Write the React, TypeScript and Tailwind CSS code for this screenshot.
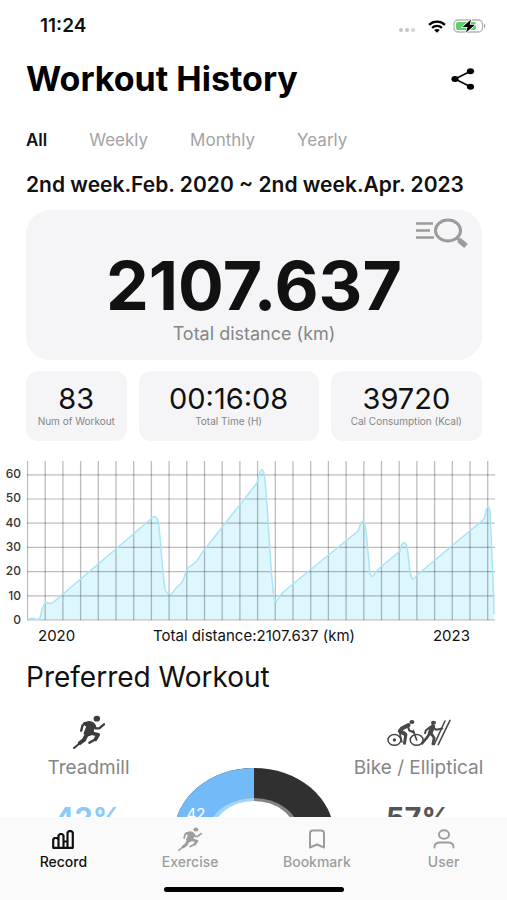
import { useState } from 'react'
import type { ReactNode } from 'react'

const tabs = ['All', 'Weekly', 'Monthly', 'Yearly']

const stats = [
  { value: '83', label: 'Num of Workout' },
  { value: '00:16:08', label: 'Total Time (H)' },
  { value: '39720', label: 'Cal Consumption (Kcal)' },
]

const axis = [60, 50, 40, 30, 20, 10, 0]
const columns = Array.from({ length: 27 }, (_, i) => i)
const rows = [0, 1, 2, 3, 4, 5, 6]

const curve =
  'M0 157.5 L7 157.5 Q11 160 13 157 Q16 143 19 141.5 Q23 143 26 141.5 L125 57 Q129 53 131 60 C134 75 135 112 138 128 Q140 135 145 132.5 Q149 126 154 122.5 C158 119 158 108 162 106 Q171 101 174 93 L178 88 L230 22 L233 11 Q235.500 5 237.500 15 C241 45 242 90 246 128 C248 148 250 138 253 135 Q256 131 261 127 L331 70 L334 62 Q337 57 339 70 C341 90 342 105 343 112 Q345 119 348 112 Q350 109 355 105 L373 90 L375 83 Q378 79 380 86 C382 96 382 108 384 115 Q386 121 390 114 L457 58 L459 50 Q461 42 463 50 C464 75 466 110 467 153'

function Wifi() {
  return (
    <svg viewBox="0 0 20 14" className="h-[13px] w-5" aria-hidden="true">
      <path d="M1.500 5.200C6.200.7 13.800.7 18.500 5.200M4.700 8.400C7.600 5.600 12.400 5.600 15.300 8.400" fill="none" stroke="black" strokeWidth="2.500" />
      <path d="M7 10.800C8.700 9.300 11.300 9.300 13 10.800L10 13.600Z" />
    </svg>
  )
}

function Battery() {
  return (
    <svg viewBox="0 0 34 16" className="h-4 w-[34px]" aria-hidden="true">
      <rect x="1" y="2" width="28.500" height="12" rx="4" fill="white" stroke="#b5b5b5" strokeWidth="1.300" />
      <rect x="3" y="4" width="20" height="8" rx="2" fill="#5fd068" />
      <path d="M31 5.500Q33.500 8 31 10.500Z" fill="#9a9a9a" />
      <path d="M18 1.500L9.500 9H14.500L13 14.500L22 6.800H16.800Z" stroke="white" strokeWidth="1.500" paintOrder="stroke" />
    </svg>
  )
}

function Share() {
  return (
    <svg viewBox="0 0 24 22" className="h-[22px] w-6" aria-hidden="true">
      <path d="M19.500 3.300L4 11L19.500 18.700" fill="none" stroke="black" strokeWidth="1.600" />
      <ellipse cx="19.500" cy="3.300" rx="3.600" ry="3" />
      <ellipse cx="4" cy="11" rx="3.600" ry="3" />
      <ellipse cx="19.500" cy="18.700" rx="3.600" ry="3" />
    </svg>
  )
}

function ListSearch() {
  return (
    <svg viewBox="0 0 52 32" className="h-8 w-[52px]" fill="none" stroke="#9b9b9b" aria-hidden="true">
      <path d="M0 5.500H17M0 12.500H14M0 19.500H18" strokeWidth="2.400" />
      <ellipse cx="32" cy="12.500" rx="12.500" ry="10.500" strokeWidth="3" />
      <path d="M41 20L44 22.500" strokeWidth="3" />
      <path d="M43 22L50 28" strokeWidth="5.500" />
    </svg>
  )
}

function Runner({ className }: { className: string }) {
  return (
    <svg viewBox="40 33 94 102" preserveAspectRatio="none" className={className} fill="none" stroke="currentColor" strokeLinecap="round" strokeLinejoin="round" aria-hidden="true">
      <ellipse cx="110" cy="44" rx="9.500" ry="8.500" fill="currentColor" stroke="none" />
      <path d="M72 58L88 54Q100 55 104 65L98 80L100 88L86 94L74 88L82 68Z" fill="currentColor" strokeWidth="6" />
      <path d="M75 59L68 64L64 80" strokeWidth="7" />
      <path d="M102 64L107 73L117 73L131 61" strokeWidth="7" />
      <path d="M82 88L72 108L60 117" strokeWidth="12" />
      <path d="M68 111L43 132" strokeWidth="6" />
      <path d="M90 86L114 92L106 106" strokeWidth="11" />
      <path d="M107 105L88 116" strokeWidth="7" />
    </svg>
  )
}

function BikeElliptical() {
  return (
    <svg viewBox="28 36 190 80" className="h-[27px] w-16" fill="none" stroke="#484848" strokeLinecap="round" strokeLinejoin="round" aria-hidden="true">
      <ellipse cx="50" cy="98" rx="19" ry="16" strokeWidth="4.500" />
      <ellipse cx="116" cy="98" rx="19" ry="16" strokeWidth="4.500" />
      <g fill="#484848" stroke="none">
        <circle cx="50" cy="98" r="5" />
        <ellipse cx="102" cy="45" rx="7.500" ry="6" />
        <ellipse cx="166" cy="47" rx="7.500" ry="6" />
      </g>
      <path d="M92 54L72 64L66 72L80 80" strokeWidth="12" />
      <path d="M66 70L84 82L80 108" strokeWidth="9" />
      <path d="M90 58L94 70L108 76" strokeWidth="6" />
      <path d="M106 70L116 98M66 78L72 104" strokeWidth="5" />
      <path d="M164 58L156 78" strokeWidth="14" />
      <path d="M156 60L143 70L141 78M164 60L174 68L192 64" strokeWidth="6" />
      <path d="M154 80L146 92L132 108M160 80L168 92L164 110" strokeWidth="8" />
      <path d="M200 42L168 112M215 40L180 112" strokeWidth="4.500" />
    </svg>
  )
}

function RecordIcon() {
  return (
    <svg viewBox="0 0 22 19" className="h-[19px] w-[22px]" fill="none" stroke="currentColor" strokeWidth="2.200" strokeLinejoin="round" aria-hidden="true">
      <path d="M1.200 17.800V9.500L2.500 8H5L6.500 9.500V17.800ZM6.500 17.800V5.500L8 4H10L11.500 5.500V17.800ZM11.500 17.800V11.500H15.500V17.800ZM15.500 17.800V2.500L17 1.200H19.500L20.800 2.500V17.800Z" />
    </svg>
  )
}

function BookmarkIcon() {
  return (
    <svg viewBox="0 0 18 20" className="h-5 w-[18px]" fill="none" stroke="currentColor" strokeWidth="2" strokeLinejoin="round" aria-hidden="true">
      <path d="M2 18.500V4Q2 1.500 5 1.500H13Q16 1.500 16 4V18.500L9 15.500Z" />
    </svg>
  )
}

function UserIcon() {
  return (
    <svg viewBox="0 0 22 20" className="h-5 w-[22px]" fill="none" stroke="currentColor" strokeWidth="2" strokeLinecap="round" aria-hidden="true">
      <ellipse cx="11" cy="5.500" rx="5" ry="4.200" />
      <path d="M1.500 18.500V17.500Q2 13.500 7 13.500H15Q20 13.500 20.500 17.500V18.500" />
    </svg>
  )
}

function DistanceChart() {
  return (
    <section className="mt-5">
      <div className="flex h-[167px] pr-3">
        <ul className="flex w-[27px] shrink-0 flex-col justify-between pt-[5px] pr-1.5 text-right text-xs leading-4 font-medium text-[#333]">
          {axis.map((n) => (
            <li key={n}>{n}</li>
          ))}
        </ul>
        <svg viewBox="0 0 468 160" preserveAspectRatio="none" className="h-40 min-w-0 flex-1" role="img" aria-label="Distance per week">
          <path d={`${curve} V159 H0 Z`} fill="#def6fd" />
          <g stroke="#000000" strokeOpacity="0.26">
            {columns.map((i) => (
              <line key={i} x1={0.5 + i * 17.7} x2={0.5 + i * 17.7} y1="0" y2="159" strokeWidth="1.300" />
            ))}
            {rows.map((i) => (
              <line key={i} x1="0" x2="468" y1={159 - i * 24.2} y2={159 - i * 24.2} strokeWidth="1.200" />
            ))}
          </g>
          <path d={curve} fill="none" stroke="#a9e5f7" strokeWidth="1.500" />
        </svg>
      </div>
      <div className="flex justify-between pr-[37px] pl-[38px] text-[15px] leading-4 text-[#111]">
        <span>2020</span>
        <span>Total distance:2107.637 (km)</span>
        <span>2023</span>
      </div>
    </section>
  )
}

function Donut() {
  return (
    <svg viewBox="0 0 160 134" className="mx-auto mt-[54px] h-[134px] w-40" role="img" aria-label="Treadmill 42%, Bike / Elliptical 57%">
      <ellipse cx="80" cy="67" rx="80" ry="67" fill="#303030" />
      <path d="M80 67V0A80 67 0 0 0 41 125.500Z" fill="#73bbf8" />
      <ellipse cx="80" cy="67" rx="46" ry="37" fill="#858585" />
      <path d="M80 67V30A46 37 0 0 0 57.500 99.500Z" fill="#a5d4fb" />
      <ellipse cx="80" cy="67" rx="42" ry="34" fill="white" />
      <text x="22" y="51" textAnchor="middle" fill="white" fontSize="15">42</text>
    </svg>
  )
}

function Preferred({ icon, name, share, color }: { icon: ReactNode; name: string; share: string; color: string }) {
  return (
    <div className="flex flex-col items-center whitespace-nowrap">
      <div className="flex h-9 items-center">{icon}</div>
      <p className="mt-1.5 text-[19px] leading-6 text-[#868686]">{name}</p>
      <p className={`mt-[22px] text-[29px] leading-8 font-bold ${color}`}>{share}</p>
    </div>
  )
}

const navItems = [
  { label: 'Record', icon: <RecordIcon /> },
  { label: 'Exercise', icon: <Runner className="h-6 w-6" /> },
  { label: 'Bookmark', icon: <BookmarkIcon /> },
  { label: 'User', icon: <UserIcon /> },
]

export default function App() {
  const [tab, setTab] = useState('All')
  const [page, setPage] = useState('Record')

  return (
    <div className="flex h-screen flex-col bg-white font-['Inter','Liberation_Sans',sans-serif] text-[#111]">
      <div className="flex h-[52px] shrink-0 items-center justify-between pr-5 pl-10">
        <span className="text-[19px] leading-6 font-semibold">11:24</span>
        <div className="flex items-center">
          <span className="mt-2 mr-3 flex gap-0.5">
            <i className="size-1 rounded-sm bg-[#c4c4c4]" />
            <i className="size-1 rounded-sm bg-[#c4c4c4]" />
            <i className="size-1 rounded-sm bg-[#d4d4d4]" />
          </span>
          <Wifi />
          <span className="ml-1.5">
            <Battery />
          </span>
        </div>
      </div>

      <main className="min-h-0 flex-1 overflow-y-auto [scrollbar-width:none]">
        <header className="flex items-center justify-between pt-[7px] pr-8 pl-[26px]">
          <h1 className="text-[34px] leading-10 font-bold text-black">Workout History</h1>
          <button type="button" aria-label="Share">
            <Share />
          </button>
        </header>

        <div className="mt-[29px] flex gap-x-[42px] px-[26px]">
          {tabs.map((t) => (
            <button key={t} type="button" onClick={() => setTab(t)} className={`text-[17px] leading-6 ${t === tab ? 'font-semibold text-[#111]' : 'text-[#a3a3a3]'}`}>
              {t}
            </button>
          ))}
        </div>

        <p className="mt-[21px] px-[26px] text-[21px] leading-6 font-semibold whitespace-nowrap">2nd week.Feb. 2020 ~ 2nd week.Apr. 2023</p>

        <div className="pr-[25px] pl-[26px]">
          <section className="relative mt-[13px] h-[150px] rounded-3xl bg-[#f5f5f7] pt-[43px] text-center">
            <button type="button" aria-label="Search records" className="absolute top-2 right-3.5">
              <ListSearch />
            </button>
            <p className="text-[68px] leading-16 font-bold">2107.637</p>
            <p className="mt-[5px] text-[18px] leading-6 text-[#868686]">Total distance (km)</p>
          </section>

          <section className="mt-[11px] grid grid-cols-[101fr_181fr_152fr] gap-3">
            {stats.map((s) => (
              <div key={s.label} className="h-[70px] rounded-xl bg-[#f5f5f7] pt-3 text-center whitespace-nowrap">
                <p className="text-[29px] leading-8">{s.value}</p>
                <p className="text-[10px] leading-3 text-[#868686]">{s.label}</p>
              </div>
            ))}
          </section>
        </div>

        <DistanceChart />

        <section className="mt-[17px]">
          <h2 className="px-[26px] text-[28px] leading-8">Preferred Workout</h2>
          <div className="mt-[21px] grid grid-cols-3 px-1.5">
            <Preferred icon={<Runner className="h-[34px] w-8 text-[#3c3c3c]" />} name="Treadmill" share="42%" color="text-[#8bcbfb]" />
            <Donut />
            <Preferred icon={<BikeElliptical />} name="Bike / Elliptical" share="57%" color="text-[#555]" />
          </div>
        </section>
      </main>

      <nav className="shrink-0 bg-[#fafafa] pt-2.5 pb-2">
        <div className="grid grid-cols-4">
          {navItems.map((n) => (
            <button key={n.label} type="button" onClick={() => setPage(n.label)} className={`flex flex-col items-center ${n.label === page ? 'text-[#111]' : 'text-[#9d9d9d]'}`}>
              <span className="flex h-6 items-center">{n.icon}</span>
              <span className="mt-[3px] text-sm leading-4 font-medium">{n.label}</span>
            </button>
          ))}
        </div>
        <div className="mx-auto mt-[17px] h-[5px] w-[180px] rounded-full bg-black" />
      </nav>
    </div>
  )
}
